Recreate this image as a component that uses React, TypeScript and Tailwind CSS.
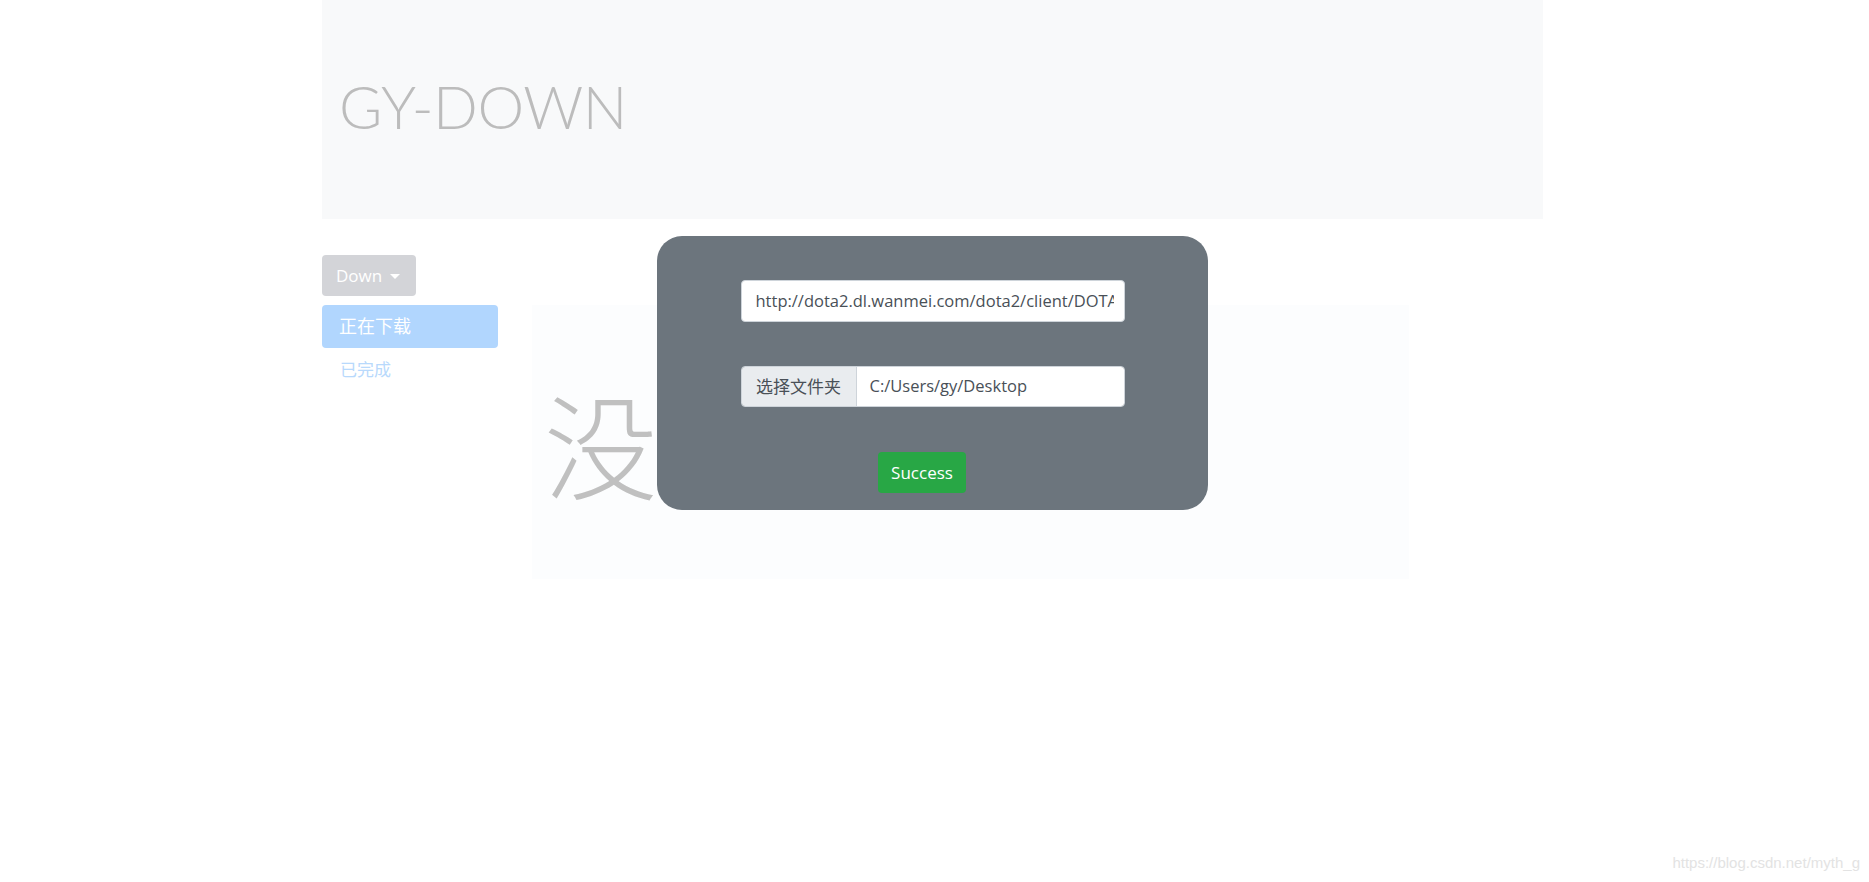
import React from "react";

const latin = "font-['Open_Sans','Noto_Sans_CJK_SC',sans-serif]";

function Sidebar() {
	return (
		<div className="w-[176px] shrink-0 flex flex-col">
			<button className="w-[94px] h-[41px] rounded-[4px] bg-[#d3d4d8] text-white text-[17px] flex items-center pl-[14px] gap-[8px]">
				<span>Down</span>
				<span className="inline-block w-0 h-0 border-t-[5px] border-x-[5px] border-t-white border-x-transparent mt-[2px]" />
			</button>
			<div className="mt-[9px] h-[43px] rounded-[4px] bg-[#b1d6fe] text-white text-[18px] flex items-center pl-[17px]">
				正在下载
			</div>
			<div className="h-[43px] text-[#b8d9fc] text-[17px] flex items-center pl-[18px]">
				已完成
			</div>
		</div>
	);
}

function DownloadModal() {
	return (
		<div className="absolute left-[657px] top-[236px] w-[551px] h-[274px] rounded-[25px] bg-[#6c757d] flex flex-col items-center pt-[44px]">
			<div className="w-[384px] h-[42px] bg-white border border-[#ced4da] rounded-[4px] flex items-center pl-[14px] pr-[10px] overflow-hidden">
				<span className="text-[#495057] text-[16.5px] whitespace-nowrap overflow-hidden">
					http://dota2.dl.wanmei.com/dota2/client/DOTA2Setup.exe
				</span>
			</div>
			<div className="mt-[44px] w-[384px] h-[41px] flex border border-[#ced4da] rounded-[4px] overflow-hidden">
				<div className="w-[115px] bg-[#e9ecef] border-r border-[#ced4da] text-[#495057] text-[17px] flex items-center justify-center">
					选择文件夹
				</div>
				<div className="flex-1 bg-white text-[#495057] text-[16.5px] flex items-center pl-[13px]">
					C:/Users/gy/Desktop
				</div>
			</div>
			<button className="mt-[45px] mr-[21px] w-[88px] h-[41px] rounded-[4px] bg-[#28a745] text-white text-[17px]">
				Success
			</button>
		</div>
	);
}

export default function App() {
	return (
		<div className={`relative w-full h-screen bg-white overflow-hidden ${latin}`}>
			<div className="w-[1225px] mx-auto pr-[4px]">
				<div className="h-[219px] bg-[#f8f9fa] flex items-center pl-[17px] pb-[6px]">
					<h1 className="font-['Lato',sans-serif] font-light text-[59px] text-[#bcbcbc] leading-none tracking-[-0.5px]">
						GY-DOWN
					</h1>
				</div>
				<div className="flex pt-[36px]">
					<Sidebar />
					<div className="ml-[34px] mt-[50px] w-[877px] h-[274px] bg-[#fcfdfe] flex items-center pl-[12px]">
						<span className="text-[114px] leading-none text-[#c0c0c0] font-['Noto_Sans_CJK_SC',sans-serif] font-light">
							没有任务
						</span>
					</div>
				</div>
			</div>
			<DownloadModal />
			<div className="absolute right-[9px] bottom-[8px] text-[15px] text-[#e3e3e3] font-['Liberation_Sans',sans-serif]">
				https://blog.csdn.net/myth_g
			</div>
		</div>
	);
}
